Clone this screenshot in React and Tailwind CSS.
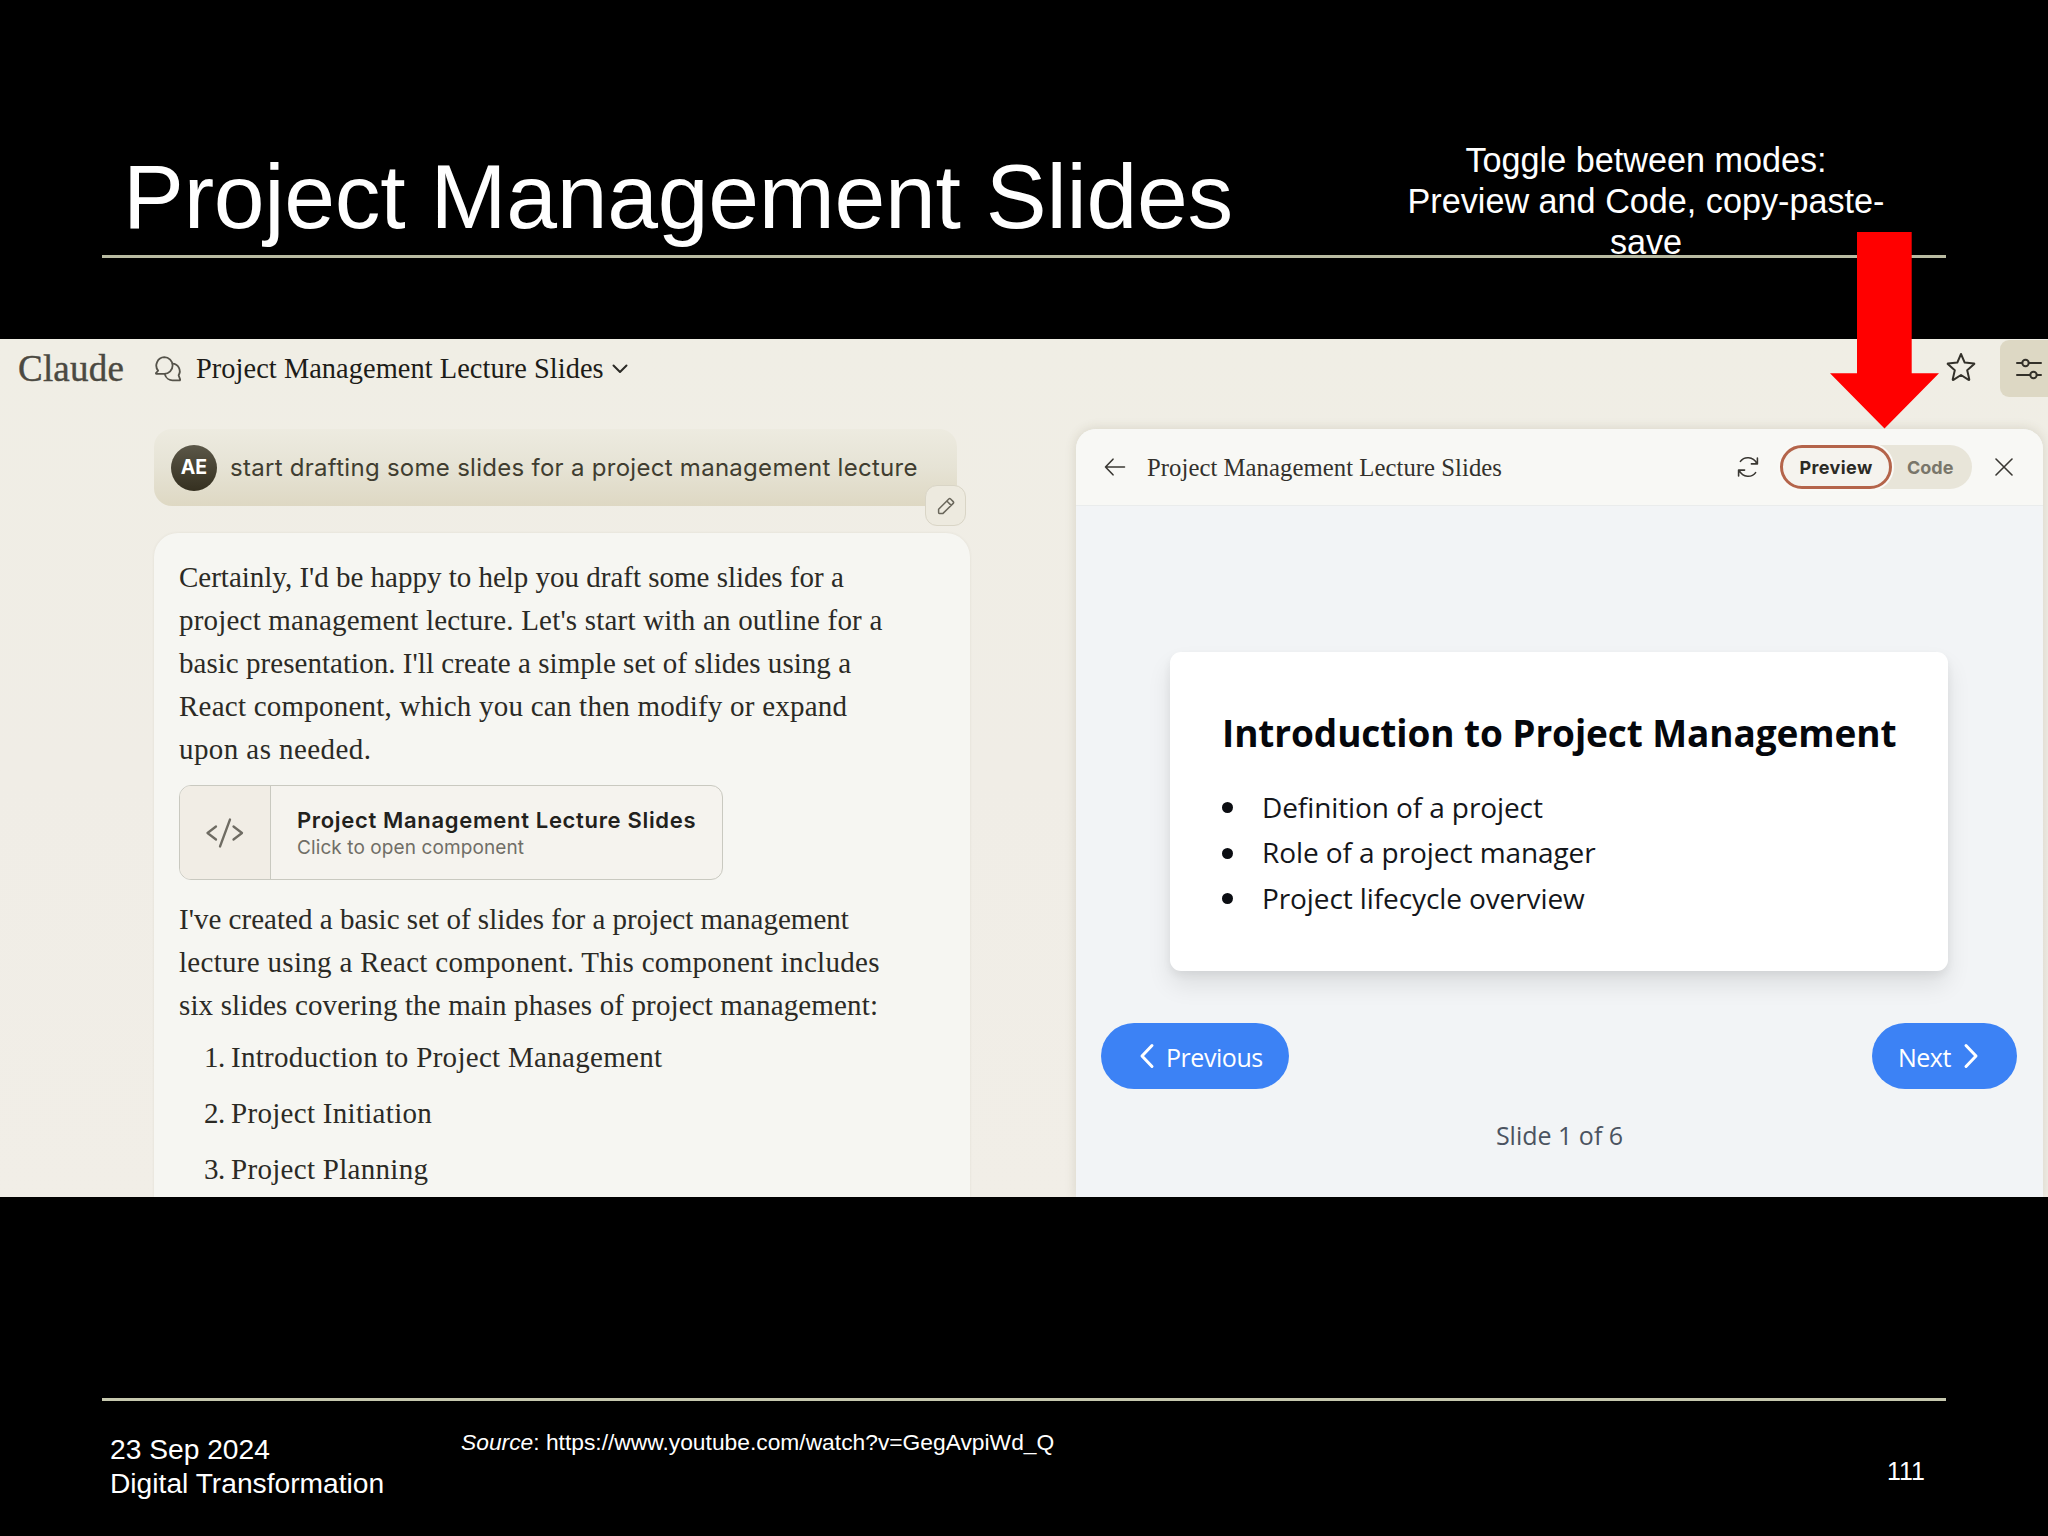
import React from 'react';
import clsx from 'clsx';

const intro = [
    { text: "Certainly, I'd be happy to help you draft some slides for a", track: 'tracking-[-0.01px]' },
    { text: "project management lecture. Let's start with an outline for a", track: 'tracking-[0.2px]' },
    { text: "basic presentation. I'll create a simple set of slides using a", track: 'tracking-[0.04px]' },
    { text: 'React component, which you can then modify or expand', track: 'tracking-[0.23px]' },
    { text: 'upon as needed.', track: 'tracking-[0.42px]' },
];

const summary = [
    { text: "I've created a basic set of slides for a project management", track: 'tracking-[0.02px]' },
    { text: 'lecture using a React component. This component includes', track: 'tracking-[0.3px]' },
    { text: 'six slides covering the main phases of project management:', track: 'tracking-[0.14px]' },
];

const outline = ['Introduction to Project Management', 'Project Initiation', 'Project Planning'];

const bullets = ['Definition of a project', 'Role of a project manager', 'Project lifecycle overview'];

const Paragraph = ({ lines, className }) => (
    <p className={clsx('text-[29px] leading-[43px] text-[#2b2a25] whitespace-nowrap', className)}>
        {lines.map((line) => (
            <span key={line.text} className={clsx('block', line.track)}>{line.text}</span>
        ))}
    </p>
);

const ChatIcon = () => (
    <svg className="w-[28px] h-[28px]" viewBox="0 0 28 28" fill="none" stroke="#55534a" strokeWidth="1.8" strokeLinejoin="round" strokeLinecap="round">
        <path d="M10.3 2.2a8.3 8.3 0 0 1 8.3 8.3 8.3 8.3 0 0 1-8.3 8.3H2.4c-.5 0-.6-.5-.3-.8l2-2.400A8.3 8.3 0 0 1 10.300 2.200Z" />
        <path d="M18.400 8.600a7.600 7.600 0 0 1 6.200 11.600l1.500 4.200c.2.6-.1 1-.7.9h-6.200a8 8 0 0 1-8.300-5.800" />
    </svg>
);

const ChevronDown = () => (
    <svg className="w-[16px] h-[10px]" viewBox="0 0 16 10" fill="none" stroke="#2b2a25" strokeWidth="2" strokeLinecap="round" strokeLinejoin="round">
        <path d="M1.500 1.500 8 8l6.500-6.500" />
    </svg>
);

const StarIcon = () => (
    <svg className="w-[30px] h-[30px]" viewBox="0 0 30 30" fill="none" stroke="#33312a" strokeWidth="2" strokeLinejoin="round">
        <path d="m15 2 3.700 8.600 9.300.8a.4.4 0 0 1 .2.7l-7 6.200 2.100 9.100a.5.5 0 0 1-.7.5L15 23l-7.600 4.900a.5.5 0 0 1-.7-.5l2.100-9.100-7-6.200a.4.4 0 0 1 .2-.7l9.300-.8Z" />
    </svg>
);

const SlidersIcon = () => (
    <svg className="w-[26px] h-[22px]" viewBox="0 0 26 22" fill="none" stroke="#33312a" strokeWidth="2" strokeLinecap="round">
        <path d="M1 5h5M13 5h12M1 17h13M21 17h4" />
        <circle cx="9.500" cy="5" r="3.200" />
        <circle cx="17.500" cy="17" r="3.200" />
    </svg>
);

const PencilIcon = () => (
    <svg className="w-[18px] h-[18px]" viewBox="0 0 18 18" fill="none" stroke="#6a675b" strokeWidth="1.500" strokeLinejoin="round">
        <path d="M1.600 12.200 11.800 2a1.300 1.300 0 0 1 1.800 0l2.600 2.600a1.300 1.300 0 0 1 0 1.800L6 16.400H2.400a.8.8 0 0 1-.8-.8ZM9.800 4l4.400 4.400" />
    </svg>
);

const CodeIcon = () => (
    <svg className="w-[40px] h-[32px]" viewBox="0 0 40 32" fill="none" stroke="#6f6c63" strokeWidth="2.300" strokeLinecap="round" strokeLinejoin="round">
        <path d="M11 9.500 2.500 16l8.500 6.500M28.500 9.500l8.500 6.500-8.500 6.500M25 2.500l-10 27" />
    </svg>
);

const ArrowLeft = () => (
    <svg className="w-[22px] h-[18px]" viewBox="0 0 22 18" fill="none" stroke="#3a3833" strokeWidth="1.600" strokeLinecap="round" strokeLinejoin="round">
        <path d="M20.500 9H1.500M9 1.200 1.500 9l7.500 7.800" />
    </svg>
);

const RefreshIcon = () => (
    <svg className="w-[22px] h-[22px]" viewBox="0 0 22 22" fill="none" stroke="#3a3833" strokeWidth="1.600" strokeLinecap="round" strokeLinejoin="round">
        <path d="M3.400 5.400C7.200.2 16 .2 19.800 7.400M20.400 2v5.900h-6M18.600 16.600C14.800 21.800 6 21.800 2.200 14.600M1.600 20v-5.900h6" />
    </svg>
);

const CloseIcon = () => (
    <svg className="w-[18px] h-[18px]" viewBox="0 0 18 18" fill="none" stroke="#3a3833" strokeWidth="1.600" strokeLinecap="round">
        <path d="m1 1 16 16M17 1 1 17" />
    </svg>
);

const Chevron = ({ right }) => (
    <svg className={clsx('w-[16px] h-[26px]', right && 'rotate-180')} viewBox="0 0 16 26" fill="none" stroke="#fff" strokeWidth="3" strokeLinecap="round" strokeLinejoin="round">
        <path d="M13 2.500 3 13l10 10.500" />
    </svg>
);

const AppHeader = () => (
    <header className="h-[59px] shrink-0 flex items-center font-['Liberation_Serif',serif]">
        <span className="pl-[18px] w-[154px] text-[37px] tracking-[0.2px] text-[#4b4941] [-webkit-text-stroke:0.4px_#4b4941]">Claude</span>
        <ChatIcon />
        <span className="ml-[14px] pt-[2px] text-[28.400px] tracking-[0.05px] text-[#1d1c18] whitespace-nowrap">
            Project Management Lecture Slides
        </span>
        <span className="ml-[8px]"><ChevronDown /></span>
        <span className="ml-auto -mt-1"><StarIcon /></span>
        <div className="ml-[24px] w-[48px] h-[57px] flex items-center pl-[16px] rounded-l-[9px] bg-[#ddd8c4]">
            <SlidersIcon />
        </div>
    </header>
);

const UserMessage = () => (
    <div className="relative w-[803px] h-[77px] flex items-center pl-[17px] rounded-[18px] bg-gradient-to-b from-[#edebe0] via-[#e6e3d5] to-[#ded8c3]">
        <div className="w-[46px] h-[46px] rounded-full flex items-center justify-center bg-gradient-to-b from-[#5b5748] to-[#353020] text-white text-[19.500px] font-bold">
            AE
        </div>
        <span className="ml-[13px] text-[24px] tracking-[0.28px] text-[#403d30] whitespace-nowrap">
            start drafting some slides for a project management lecture
        </span>
        <button className="absolute -right-[9px] -bottom-[20px] w-[41px] h-[41px] flex items-center justify-center rounded-[12px] border border-[#d9d5c6] bg-[#edeadf]">
            <PencilIcon />
        </button>
    </div>
);

const AssistantMessage = () => (
    <div className="mt-[27px] w-[816px] grow pt-[23px] pl-[25px] rounded-t-[24px] bg-[#f6f6f2] shadow-[0_0_3px_rgba(60,50,20,0.08)] font-['Liberation_Serif',serif]">
        <Paragraph lines={intro} />
        <div className="mt-[14px] w-[544px] h-[95px] flex rounded-[12px] border border-[#c9c9c0] bg-[#f5f3ee] overflow-hidden font-['Inter',sans-serif]">
            <div className="w-[91px] flex items-center justify-center border-r border-[#c9c9c0] bg-[#f1ede5]">
                <CodeIcon />
            </div>
            <div className="pl-[26px] pt-[20px] whitespace-nowrap">
                <p className="text-[22px] leading-[29px] font-semibold tracking-[0.67px] text-[#22211c]">
                    Project Management Lecture Slides
                </p>
                <p className="text-[19px] leading-[25px] tracking-[0.1px] text-[#706e66]">Click to open component</p>
            </div>
        </div>
        <Paragraph lines={summary} className="mt-[18px]" />
        <ol className="mt-[2px] pl-[25px] text-[29px] leading-[56px] tracking-[0.3px] text-[#2b2a25]">
            {outline.map((item, i) => (
                <li key={item} className="flex">
                    <span className="w-[27px] tracking-[-0.6px]">{i + 1}.</span>
                    {item}
                </li>
            ))}
        </ol>
    </div>
);

const PreviewPanel = () => (
    <section className="w-[967px] flex flex-col rounded-t-[20px] overflow-hidden bg-[#f2f4f6] shadow-[0_0_12px_rgba(80,70,30,0.16)]">
        <div className="h-[77px] shrink-0 flex items-center pl-[28px] bg-[#f8f8f5] border-b border-[#eaecec]">
            <ArrowLeft />
            <span className="ml-[21px] pt-[2px] w-[590px] text-[24.700px] tracking-[0.06px] text-[#33312c] font-['Liberation_Serif',serif]">
                Project Management Lecture Slides
            </span>
            <RefreshIcon />
            <div className="ml-[21px] h-[44px] w-[192px] flex items-center rounded-full bg-[#e8e5d9] text-[18px] font-bold">
                <span className="h-full w-[112px] flex items-center justify-center rounded-full border-[3px] border-[#b4644a] bg-[#f5f3ee] tracking-[0.4px] text-[#2b2a25] shadow-[0_0_0_2px_#faf9f6]">
                    Preview
                </span>
                <span className="ml-[15px] text-[#79766a]">Code</span>
            </div>
            <span className="ml-[23px]"><CloseIcon /></span>
        </div>
        <div className="grow flex flex-col font-['Open_Sans',sans-serif]">
            <div className="ml-[94px] mt-[146px] w-[778px] h-[319px] pl-[52px] pt-[57px] rounded-[11px] bg-white shadow-[0_14px_24px_rgba(0,0,0,0.09),0_4px_8px_rgba(0,0,0,0.06)]">
                <h2 className="text-[37px] leading-[48px] font-bold tracking-[-0.1px] text-[#05070c] whitespace-nowrap">
                    Introduction to Project Management
                </h2>
                <ul className="mt-[28px] text-[28px] leading-[45.400px] tracking-[-0.1px] text-[#14161a]">
                    {bullets.map((item) => (
                        <li key={item} className="flex items-center">
                            <span className="w-[11px] h-[11px] mr-[29px] rounded-full bg-[#0b0d12]" />
                            {item}
                        </li>
                    ))}
                </ul>
            </div>
            <div className="mt-[52px] pl-[25px] pr-[26px] flex justify-between text-[25px] text-white">
                <button className="w-[188px] h-[66px] pl-[38px] flex items-center gap-[11px] rounded-full bg-[#3c82f5] tracking-[-0.45px]">
                    <Chevron />
                    <span className="pt-[3px]">Previous</span>
                </button>
                <button className="w-[145px] h-[66px] pl-[26px] flex items-center gap-[12px] rounded-full bg-[#3c82f5] tracking-[-0.5px]">
                    <span className="pt-[3px]">Next</span>
                    <Chevron right />
                </button>
            </div>
            <p className="mt-[31px] text-center text-[25px] leading-[30px] text-[#4b5360]">Slide 1 of 6</p>
        </div>
    </section>
);

export default function App() {
    return (
        <div className="relative w-[2048px] h-[1536px] flex flex-col overflow-hidden bg-black text-white font-['Liberation_Sans',Arial,sans-serif]">
            <div className="ml-[102px] w-[1844px] h-[258px] shrink-0 flex items-start border-b-[3px] border-[#b9bba2]">
                <h1 className="mt-[146px] pl-[21px] w-[1284px] text-[91.300px] leading-[100px] tracking-[-0.26px] whitespace-nowrap">
                    Project Management Slides
                </h1>
                <p className="mt-[140px] w-[520px] text-center text-[34.200px] leading-[41px]">
                    Toggle between modes:<br />
                    Preview and Code, copy-paste-<br />
                    save
                </p>
            </div>

            <main className="mt-[81px] h-[858px] shrink-0 flex flex-col overflow-hidden bg-gradient-to-b from-[#f0eee5] via-[#f0ede6] to-[#f1eee7] font-['Inter',sans-serif]">
                <AppHeader />
                <div className="mt-[31px] pl-[154px] grow flex">
                    <div className="w-[922px] flex flex-col">
                        <UserMessage />
                        <AssistantMessage />
                    </div>
                    <PreviewPanel />
                </div>
            </main>

            <footer className="ml-[102px] mt-[201px] w-[1844px] flex items-start border-t-[3px] border-[#c6c8ae]">
                <div className="mt-[31px] pl-[8px] w-[359px] text-[28.200px] leading-[34px] whitespace-nowrap">
                    <p>23 Sep 2024</p>
                    <p>Digital Transformation</p>
                </div>
                <p className="mt-[24px] text-[22.800px] leading-[34px]">
                    <em>Source</em>: https://www.youtube.com/watch?v=GegAvpiWd_Q
                </p>
                <p className="ml-auto mr-[21px] mt-[53px] text-[25px] leading-[34px]">111</p>
            </footer>

            {/* Callout arrow pointing at the mode toggle */}
            <svg className="absolute left-[1830px] top-[232px] w-[109px] h-[197px]" viewBox="0 0 109 197">
                <path d="M27 0h54.700v141.300H109L54.500 196.500 0 141.300h27Z" fill="#ff0000" />
            </svg>
        </div>
    );
}
